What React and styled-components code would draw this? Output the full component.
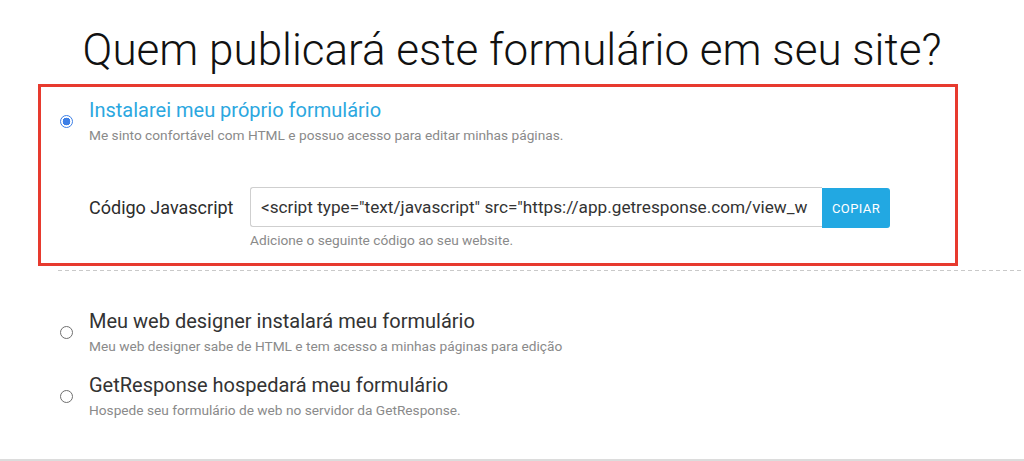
import React from "react";
import styled, { createGlobalStyle } from "styled-components";

const GlobalStyle = createGlobalStyle`
  body {
    margin: 0;
    background: #fff;
    font-family: Roboto, "Liberation Sans", sans-serif;
  }
`;

const Page = styled.div`
  width: 1024px;
  height: 461px;
  overflow: hidden;
  display: flex;
  flex-direction: column;
`;

const Heading = styled.h1`
  margin: 24px 0 8px;
  font-size: 44px;
  line-height: 52px;
  font-weight: 300;
  color: #111;
  text-align: center;
`;

const Highlight = styled.div`
  box-sizing: border-box;
  width: 920px;
  margin-left: 38px;
  border: 3px solid #e73a2e;
  padding: 12px 0 14px 19px;
`;

const Option = styled.div`
  display: flex;
  align-items: center;
  gap: 16px;
  margin-top: ${(p) => p.$top || 0}px;
`;

const Radio = styled.span`
  box-sizing: border-box;
  flex: none;
  width: 13px;
  height: 13px;
  border-radius: 50%;
  border: ${(p) => (p.$checked ? "1.5px solid #3d7fe6" : "1.2px solid #6f6f6f")};
  background: ${(p) =>
    p.$checked ? "radial-gradient(circle, #3d7fe6 0 3.6px, #fff 4.1px)" : "#fff"};
`;

const OptionText = styled.div`
  display: flex;
  flex-direction: column;
  gap: 5px;
`;

const OptionTitle = styled.div`
  font-size: 20px;
  line-height: 22px;
  color: ${(p) => (p.$active ? "#2ba7df" : "#333")};
`;

const OptionHint = styled.div`
  font-size: 13.7px;
  line-height: 18px;
  color: #8a8a8a;
`;

const CodeRow = styled.div`
  display: grid;
  grid-template-columns: 161px 640px;
  row-gap: 4px;
  margin: 43px 0 0 29px;
  align-items: center;
`;

const CodeLabel = styled.label`
  font-size: 18px;
  color: #2c2c2c;
`;

const CodeField = styled.div`
  display: flex;
  height: 40px;
`;

const CodeInput = styled.input`
  box-sizing: border-box;
  width: 572px;
  height: 40px;
  margin: 0;
  padding: 0 8px 0 10px;
  border: 1px solid #cfcfcf;
  border-right: none;
  border-radius: 3px 0 0 3px;
  font-family: Roboto, "Liberation Sans", sans-serif;
  font-size: 17.2px;
  color: #333;
  outline: none;
`;

const CopyButton = styled.button`
  width: 68px;
  height: 40px;
  margin: 1px 0 0;
  border: none;
  border-radius: 0 3px 3px 0;
  background: #22a8e2;
  color: #fff;
  font-family: Roboto, "Liberation Sans", sans-serif;
  font-size: 13px;
  letter-spacing: 0.4px;
  cursor: pointer;
`;

const CodeHint = styled(OptionHint)`
  grid-column: 2;
`;

const Divider = styled.div`
  margin: 4px 0 0 58px;
  height: 1px;
  background: repeating-linear-gradient(90deg, #c9c9c9 0 4px, transparent 4px 7px);
`;

const OtherOptions = styled.div`
  padding: 39px 0 0 60px;
`;

const BottomRule = styled.div`
  margin-top: 40px;
  height: 2px;
  background: #dcdcdc;
`;

const options = [
  {
    id: "designer",
    title: "Meu web designer instalará meu formulário",
    hint: "Meu web designer sabe de HTML e tem acesso a minhas páginas para edição",
  },
  {
    id: "hosted",
    title: "GetResponse hospedará meu formulário",
    hint: "Hospede seu formulário de web no servidor da GetResponse.",
  },
];

const App = () => {
  return (
    <>
      <GlobalStyle />
      <Page>
        <Heading>Quem publicará este formulário em seu site?</Heading>
        <Highlight>
          <Option>
            <Radio $checked />
            <OptionText>
              <OptionTitle $active>Instalarei meu próprio formulário</OptionTitle>
              <OptionHint>
                Me sinto confortável com HTML e possuo acesso para editar minhas páginas.
              </OptionHint>
            </OptionText>
          </Option>
          <CodeRow>
            <CodeLabel>Código Javascript</CodeLabel>
            <CodeField>
              <CodeInput
                readOnly
                value={'<script type="text/javascript" src="https://app.getresponse.com/view_w'}
              />
              <CopyButton>COPIAR</CopyButton>
            </CodeField>
            <CodeHint>Adicione o seguinte código ao seu website.</CodeHint>
          </CodeRow>
        </Highlight>
        <Divider />
        <OtherOptions>
          {options.map((item, i) => (
            <Option key={item.id} $top={i ? 19 : 0}>
              <Radio />
              <OptionText>
                <OptionTitle>{item.title}</OptionTitle>
                <OptionHint>{item.hint}</OptionHint>
              </OptionText>
            </Option>
          ))}
        </OtherOptions>
        <BottomRule />
      </Page>
    </>
  );
};

export default App;
